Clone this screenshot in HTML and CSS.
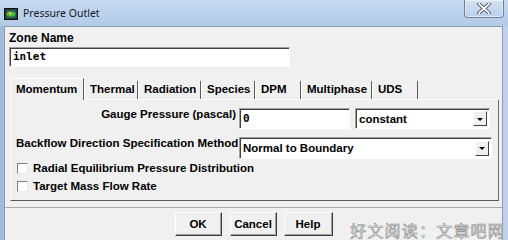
FILE: index.html
```html
<!DOCTYPE html>
<html lang="en">
<head>
    <meta charset="UTF-8">
    <title>Pressure Outlet</title>
    <link rel="stylesheet" href="styles.css">
</head>
<body>
    <div class="window">
        <div class="titlebar">
            <svg class="app-icon" width="14" height="12" viewBox="0 0 14 12">
                <rect x="0.5" y="0.5" width="13" height="11" fill="#27403c" stroke="#111"/>
                <rect x="2" y="2" width="10" height="8" fill="#2f5a52"/>
                <ellipse cx="7" cy="6" rx="4.5" ry="2.6" fill="#38c23a"/>
                <ellipse cx="5.6" cy="5.6" rx="1.8" ry="1.3" fill="#e8e23a"/>
                <circle cx="4.6" cy="5.8" r="0.9" fill="#d8401e"/>
            </svg>
            <span class="title">Pressure Outlet</span>
            <div class="close-btn">
                <svg width="14" height="11" viewBox="0 0 14 11">
                    <path d="M2 1 L12 10 M12 1 L2 10" stroke="#3d4a5c" stroke-width="3.6" stroke-linecap="square"/>
                    <path d="M2 1 L12 10 M12 1 L2 10" stroke="#fff" stroke-width="1.8" stroke-linecap="square"/>
                </svg>
            </div>
        </div>

        <div class="client">
            <div class="zone-label">Zone Name</div>
            <div class="field zone-input">inlet</div>

            <div class="tabs">
                <div class="tab tab-momentum active">Momentum</div>
                <div class="tab tab-thermal">Thermal</div>
                <div class="tab tab-radiation">Radiation</div>
                <div class="tab tab-species">Species</div>
                <div class="tab tab-dpm">DPM</div>
                <div class="tab tab-multiphase">Multiphase</div>
                <div class="tab tab-uds">UDS</div>
            </div>

            <div class="panel">
                <div class="form-grid">
                    <div class="form-label">Gauge Pressure (pascal)</div>
                    <div class="control-row">
                        <div class="field gauge-input">0</div>
                        <div class="combo combo-profile">
                            <span class="combo-text">constant</span>
                            <span class="combo-arrow"></span>
                        </div>
                    </div>
                    <div class="form-label">Backflow Direction Specification Method</div>
                    <div class="control-row">
                        <div class="combo combo-direction">
                            <span class="combo-text">Normal to Boundary</span>
                            <span class="combo-arrow"></span>
                        </div>
                    </div>
                </div>

                <div class="check-list">
                    <div class="check-row">
                        <span class="check-box"></span>
                        <span class="check-label">Radial Equilibrium Pressure Distribution</span>
                    </div>
                    <div class="check-row">
                        <span class="check-box"></span>
                        <span class="check-label">Target Mass Flow Rate</span>
                    </div>
                </div>
            </div>

            <div class="footer">
                <button class="btn btn-ok">OK</button>
                <button class="btn btn-cancel">Cancel</button>
                <button class="btn btn-help">Help</button>
            </div>
        </div>

        <div class="watermark">好文阅读：文章吧网</div>
    </div>
</body>
</html>
```

FILE: styles.css
```css
* {
    margin: 0;
    padding: 0;
    box-sizing: border-box;
}

body {
    background: #a9c3e2;
}

.window {
    position: relative;
    width: 508px;
    height: 240px;
    overflow: hidden;
    display: flex;
    flex-direction: column;
    background: linear-gradient(to right, #9fbbdd 0%, #b4cce9 40%, #bcd2ec 100%);
    font-family: "Liberation Sans", Arial, sans-serif;
    color: #000;
}

/* title bar */

.titlebar {
    position: relative;
    height: 26px;
    display: flex;
    align-items: center;
    padding-left: 4px;
    background: linear-gradient(to bottom, #c6d9f0 0%, #bad0ec 60%, #b2cae7 100%);
}

.app-icon {
    display: block;
    margin-top: 1px;
}

.title {
    margin-left: 5px;
    font-family: "Noto Sans", "Open Sans", sans-serif;
    font-size: 10.5px;
    color: #1a1a1a;
}

.close-btn {
    position: absolute;
    top: 0;
    right: 4px;
    width: 40px;
    height: 18px;
    display: flex;
    align-items: center;
    justify-content: center;
    border: 1px solid #6f7f96;
    border-top: none;
    border-radius: 0 0 4px 4px;
    background: linear-gradient(to bottom, #d3e1f2 0%, #bcd0ea 100%);
    box-shadow: inset 0 0 0 1px rgba(255, 255, 255, 0.5);
}

/* client area */

.client {
    flex: 1;
    margin: 0 5px 0 4px;
    background: #f0f0f0;
    border: 1px solid #8e9db1;
    border-bottom: none;
}

.zone-label {
    padding: 4px 0 0 4px;
    font-size: 12px;
    font-weight: bold;
    line-height: 14px;
}

.field {
    height: 20px;
    background: #fff;
    border: 1px solid;
    border-color: #a0a0a0 #fff #fff #a0a0a0;
    box-shadow: inset 1px 1px 0 #404040;
    font-family: "DejaVu Sans Mono", "Liberation Mono", monospace;
    font-weight: bold;
    font-size: 11px;
    line-height: 18px;
    padding-left: 3px;
}

.zone-input {
    width: 281px;
    margin: 2px 0 0 4px;
}

/* tabs */

.tabs {
    display: flex;
    align-items: flex-end;
    height: 21px;
    margin: 11px 0 0 5px;
}

.tab {
    height: 18px;
    padding-left: 5px;
    font-size: 11.5px;
    font-weight: bold;
    line-height: 17px;
    border-left: 1px solid #fff;
    border-right: 1px solid #5a5a5a;
    white-space: nowrap;
}

.tab.active {
    position: relative;
    height: 22px;
    margin-bottom: -1px;
    padding-top: 2px;
    border-top: 1px solid #fff;
    background: #f0f0f0;
}

.tab-momentum { width: 74px; }
.tab-thermal { width: 54px; }
.tab-radiation { width: 63px; }
.tab-species { width: 54px; }
.tab-dpm { width: 46px; }
.tab-multiphase { width: 71px; }
.tab-uds { width: 46px; }

.panel {
    width: 489px;
    height: 102px;
    margin-left: 5px;
    padding: 7px 0 0 5px;
    border: 1px solid;
    border-color: #fff #6e6e6e #5a5a5a #fff;
}

.form-grid {
    display: grid;
    grid-template-columns: 220px auto;
    column-gap: 3px;
    row-gap: 7px;
    align-items: start;
}

.form-label {
    text-align: right;
    font-size: 11.5px;
    font-weight: bold;
    line-height: 14px;
    white-space: nowrap;
}

.control-row {
    display: flex;
    gap: 5px;
    margin-top: 1px;
}

.gauge-input {
    width: 111px;
    height: 21px;
    line-height: 19px;
}

.combo {
    display: flex;
    align-items: center;
    justify-content: space-between;
    height: 21px;
    padding: 0 2px 0 3px;
    background: #fff;
    border: 1px solid;
    border-color: #a0a0a0 #fff #fff #a0a0a0;
    box-shadow: inset 1px 1px 0 #404040;
}

.combo-profile { width: 135px; }
.combo-direction { width: 253px; height: 22px; }

.combo-text {
    font-size: 11.5px;
    font-weight: bold;
    white-space: nowrap;
}

.combo-arrow {
    width: 14px;
    height: 15px;
    display: flex;
    align-items: center;
    justify-content: center;
    background: #f0f0f0;
    border: 1px solid;
    border-color: #fff #404040 #404040 #fff;
}

.combo-arrow::after {
    content: "";
    border-left: 3px solid transparent;
    border-right: 3px solid transparent;
    border-top: 3px solid #000;
    margin-top: 1px;
}

/* checkboxes */

.check-row {
    display: flex;
    align-items: center;
    height: 18px;
}

.check-box {
    width: 11px;
    height: 11px;
    margin: 0 5px 0 1px;
    background: #fff;
    border: 1px solid;
    border-color: #808080 #e8e8e8 #e8e8e8 #808080;
}

.check-label {
    font-size: 11.5px;
    font-weight: bold;
    white-space: nowrap;
}

/* buttons */

.footer {
    display: flex;
    justify-content: center;
    gap: 8px;
    margin-top: 6px;
    padding-top: 4px;
    border-top: 1px solid #a8a8a8;
}

.btn {
    height: 24px;
    background: #f0f0f0;
    border: 1px solid;
    border-color: #fff #404040 #404040 #fff;
    box-shadow: inset -1px -1px 0 #a0a0a0;
    font-family: "Liberation Sans", Arial, sans-serif;
    font-size: 11.5px;
    font-weight: bold;
    color: #000;
}

.btn-ok { width: 47px; }
.btn-cancel { width: 47px; }
.btn-help { width: 49px; margin-left: -1px; }

.watermark {
    position: absolute;
    right: 3px;
    bottom: 0;
    font-family: "Noto Sans CJK SC", sans-serif;
    font-size: 16px;
    line-height: 20px;
    color: #f2f2f2;
    -webkit-text-stroke: 0.6px #8a8a8a;
    letter-spacing: 1.2px;
}
```
